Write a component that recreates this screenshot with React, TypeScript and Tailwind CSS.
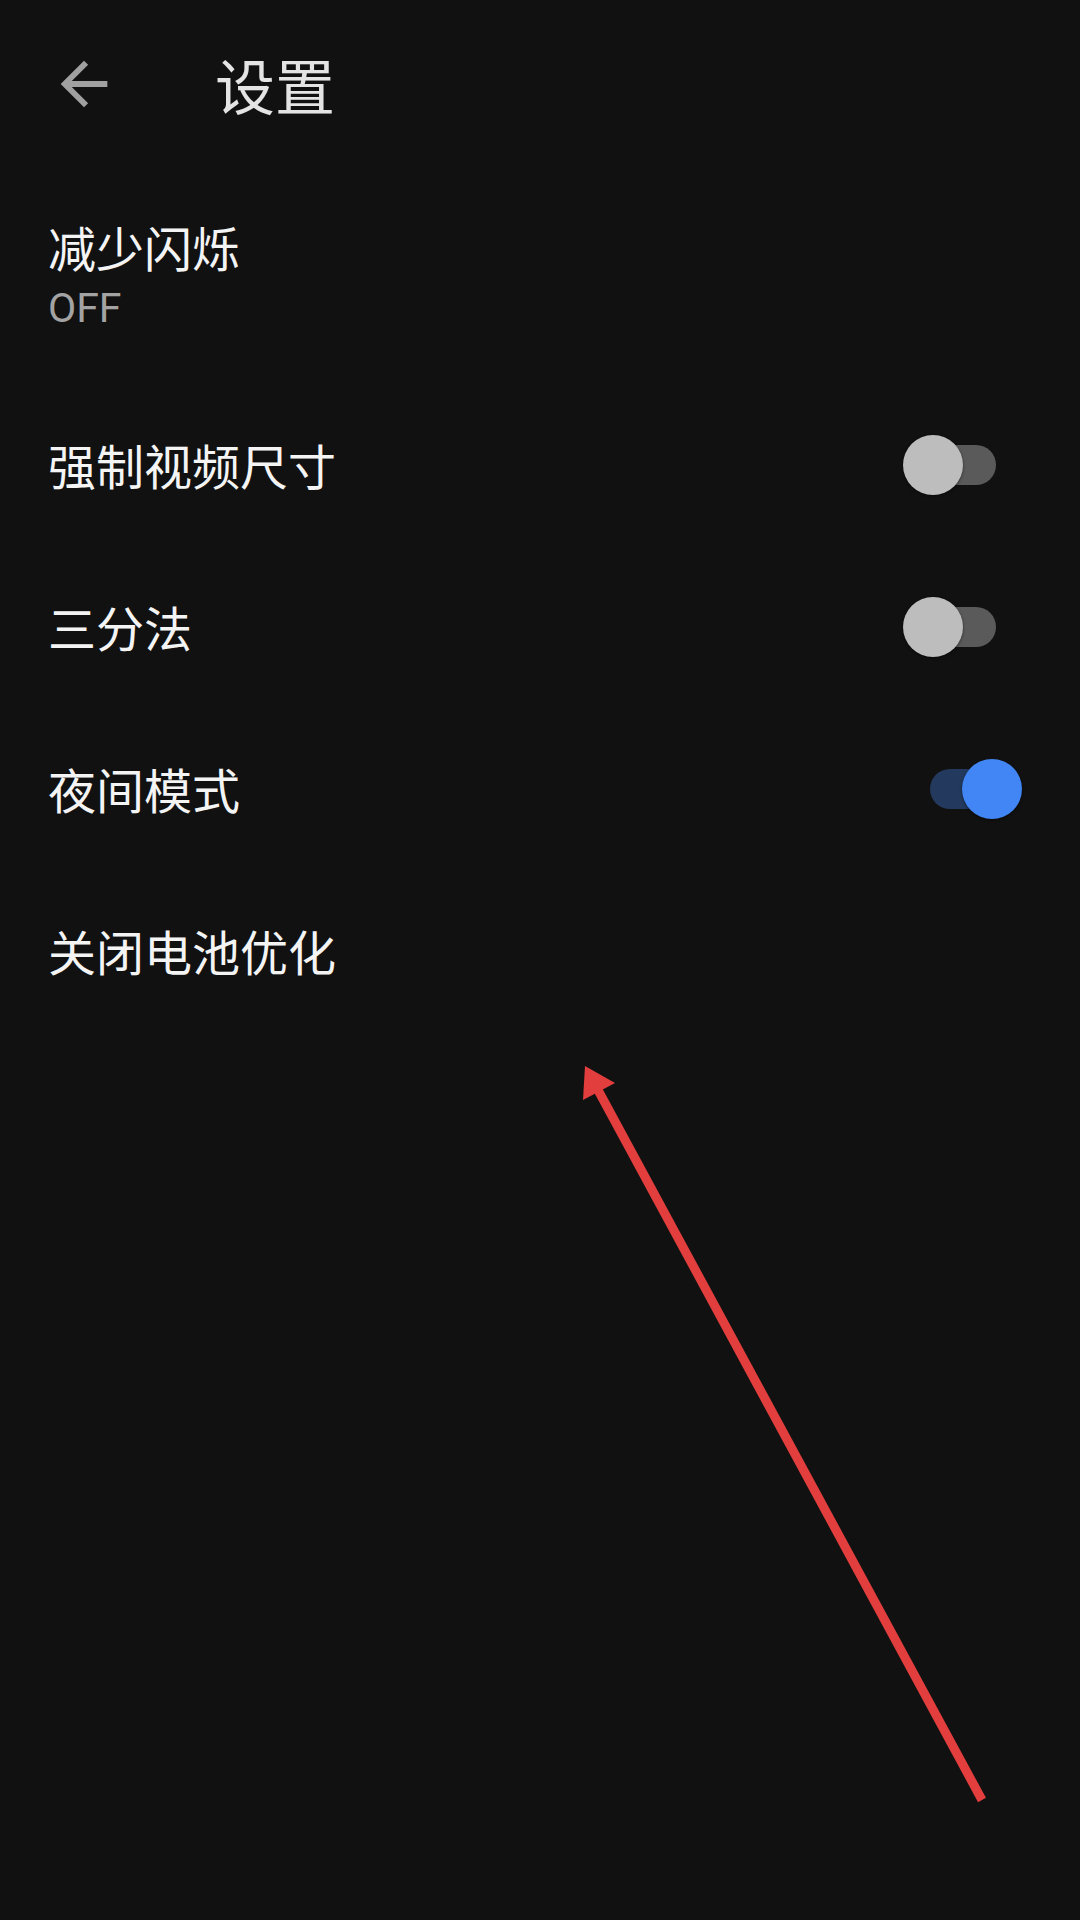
const Toggle = ({ on }: { on: boolean }) => {
  return (
    <div className="relative w-[120px] h-[60px] shrink-0">
      <div
        className={
          on
            ? "absolute left-[27px] top-[10px] w-[66px] h-[40px] rounded-full bg-[#233a5e]"
            : "absolute left-[27px] top-[10px] w-[66px] h-[40px] rounded-full bg-[#5a5a5a]"
        }
      ></div>
      <div
        className={
          on
            ? "absolute top-0 left-[59px] w-[60px] h-[60px] rounded-full bg-[#4285f4] shadow-[0_1px_3px_rgba(0,0,0,0.5)]"
            : "absolute top-0 left-0 w-[60px] h-[60px] rounded-full bg-[#bdbdbd] shadow-[0_1px_3px_rgba(0,0,0,0.5)]"
        }
      ></div>
    </div>
  );
};

const Row = ({ label, toggle }: { label: string; toggle?: boolean }) => {
  return (
    <div className="flex items-center justify-between h-[162px] pl-[48px] pr-[57px]">
      <span className="pb-[3px] text-[48px] leading-[56px] text-[#f4f4f4]">{label}</span>
      {toggle !== undefined && <Toggle on={toggle} />}
    </div>
  );
};

export default function App() {
  return (
    <div
      className="relative w-[1080px] h-[1920px] bg-[#111111] overflow-hidden"
      style={{ fontFamily: '"Noto Sans CJK SC", sans-serif' }}
    >
      {/* top bar */}
      <div className="flex items-center h-[168px] pl-[49px]">
        <svg width="70" height="70" viewBox="0 0 24 24" fill="#a0a0a0">
          <path d="M20 11H7.83l5.59-5.59L12 4l-8 8 8 8 1.41-1.41L7.83 13H20v-2z" />
        </svg>
        <h1 className="ml-[96px] text-[60px] leading-[68px] text-[#e4e4e4]">设置</h1>
      </div>

      <div className="flex flex-col">
        <div className="flex flex-col pl-[48px] pt-[50px] pb-[52px]">
          <span className="text-[48px] leading-[56px] text-[#f4f4f4]">减少闪烁</span>
          <span
            className="mt-[10px] text-[41px] leading-[48px] text-[#a3a3a3]"
            style={{ fontFamily: 'Roboto, "Noto Sans", sans-serif' }}
          >
            OFF
          </span>
        </div>
        <Row label="强制视频尺寸" toggle={false} />
        <Row label="三分法" toggle={false} />
        <Row label="夜间模式" toggle={true} />
        <Row label="关闭电池优化" />
      </div>

      {/* red annotation arrow */}
      <svg
        className="absolute left-0 top-0 pointer-events-none"
        width="1080"
        height="1920"
        viewBox="0 0 1080 1920"
      >
        <line x1="982" y1="1800" x2="598" y2="1090" stroke="#e33e3e" strokeWidth="9" />
        <polygon points="585,1066 583,1100 615,1083" fill="#e33e3e" />
      </svg>
    </div>
  );
}
